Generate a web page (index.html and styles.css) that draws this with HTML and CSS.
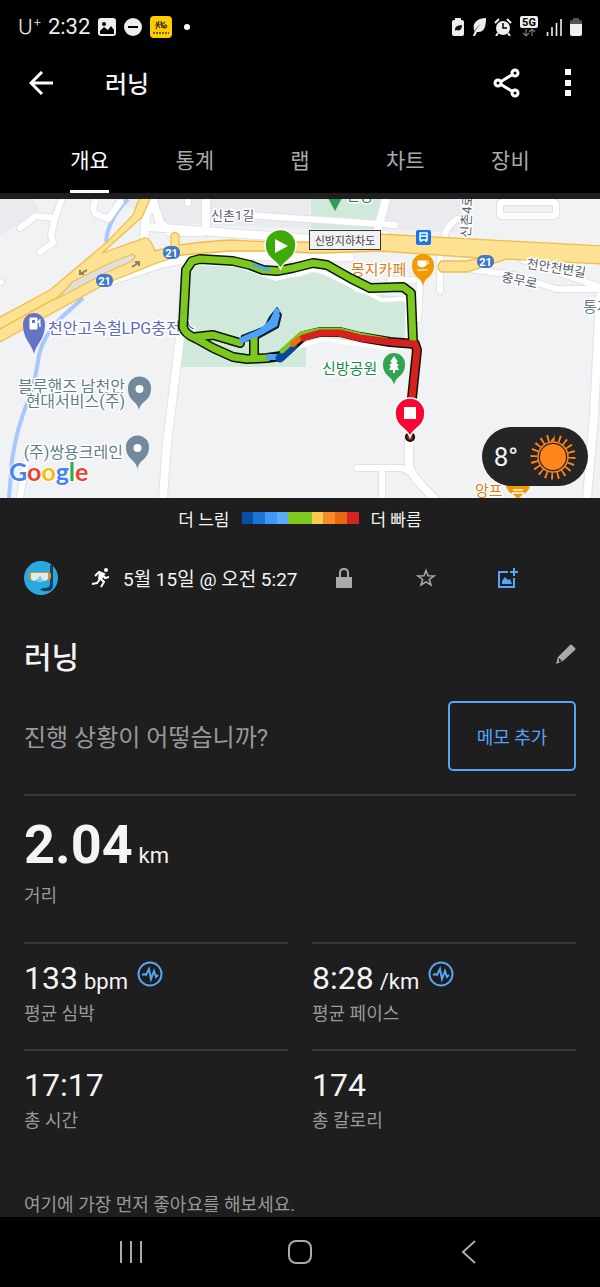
FILE: index.html
```html
<!DOCTYPE html>
<html lang="ko">

<head>
  <meta charset="UTF-8">
  <title>러닝</title>
  <meta name="viewport" content="width=device-width, initial-scale=1">
  <link rel="stylesheet" href="styles.css">
</head>

<body>

  <header>
    <!-- Status bar -->
    <div class="status-bar">
      <div class="status-group">
        <span class="carrier">U<sup>+</sup></span>
        <span class="clock">2:32</span>
        <svg width="18" height="18" viewBox="0 0 18 18">
          <rect width="18" height="18" rx="3" fill="#eee"/>
          <circle cx="6" cy="6" r="2" fill="#000"/>
          <path d="M2 13l4-4 4 3 3-4 3 4v4H2z" fill="#000"/>
        </svg>
        <svg width="18" height="18" viewBox="0 0 18 18">
          <circle cx="9" cy="9" r="9" fill="#eee"/>
          <path d="M4 9h10" stroke="#000" stroke-width="2"/>
        </svg>
        <svg width="22" height="22" viewBox="0 0 22 22">
          <rect width="22" height="22" rx="4" fill="#fc0"/>
          <path d="M5 9l6-1M6 6l4 6M9 5l-3 8M11 5l1 7M11 9l4-3M12 9l2 3M14 10c3-3 4 2 0 2z" fill="none" stroke="#42350c" stroke-width="1.200"/>
          <path d="M3 17h16" stroke="#75600a" stroke-width="2" stroke-dasharray="2 1"/>
        </svg>
        <span class="dot"></span>
      </div>
      <div class="status-group status-right">
        <svg width="12" height="18" viewBox="0 0 12 18">
          <path d="M3 2V0h6v2h1q2 0 2 2v12q0 2-2 2H2q-2 0-2-2V4q0-2 2-2z" fill="#eee"/>
          <path d="M3 13Q2 7 10 7Q10 14 4 12L2 14M4 12l3-3" fill="#111"/>
        </svg>
        <svg width="14" height="18" viewBox="0 0 14 18">
          <path d="M3 14C-1 7 4 0 14 0C14 9 12 15 5 14L3 18H1Q3 11 9 6Q3 10 2 15z" fill="#eee"/>
        </svg>
        <svg width="18" height="18" viewBox="0 0 18 18">
          <circle cx="9" cy="10" r="7" fill="#eee"/>
          <path d="M1 5l4-4M17 5l-4-4M4 15l-2 3M14 15l2 3" stroke="#eee" stroke-width="2"/>
          <path d="M9 5v5h4" fill="none" stroke="#000" stroke-width="1.500"/>
        </svg>
        <svg width="18" height="21" viewBox="0 0 18 21">
          <rect width="18" height="12" rx="2" fill="#eee"/>
          <text x="9" y="10" class="five-g">5G</text>
          <path d="M6 13v6M3 17l3 3 3-3M12 20v-6M9 16l3-3 3 3" fill="none" stroke="#777" stroke-width="1.200"/>
        </svg>
        <svg width="16" height="18" viewBox="0 0 16 18">
          <path d="M1.500 14v4M6 9v9M10.500 5v13M15 1v17" stroke="#eee" stroke-width="1.600"/>
        </svg>
        <svg width="12" height="18" viewBox="0 0 12 18">
          <path d="M3 2V0h6v2h1q2 0 2 2v2H0V4q0-2 2-2z" fill="#555"/>
          <path d="M0 6h12v10q0 2-2 2H2q-2 0-2-2z" fill="#eee"/>
        </svg>
      </div>
    </div>

    <!-- App bar -->
    <div class="app-bar">
      <a class="icon-btn" href="#" aria-label="뒤로">
        <svg width="24" height="24" viewBox="0 0 24 24"><path d="M13 1L2 12l11 11M2 12h22" fill="none" stroke="#fff" stroke-width="3"/></svg>
      </a>
      <h1>러닝</h1>
      <button class="icon-btn" type="button" aria-label="공유">
        <svg width="28" height="30" viewBox="0 0 28 30">
          <g fill="none" stroke="#fff" stroke-width="3">
            <circle cx="5" cy="15" r="3"/><circle cx="22" cy="5" r="3"/><circle cx="22" cy="25" r="3"/>
            <path d="M8 13.500L19.500 6.500M8 16.500l11.500 7"/>
          </g>
        </svg>
      </button>
      <button class="icon-btn" type="button" aria-label="더보기">
        <svg width="6" height="28" viewBox="0 0 6 28"><path d="M0 0h6v6H0zM0 11h6v6H0zM0 21h6v6H0z" fill="#fff"/></svg>
      </button>
    </div>

    <nav class="tabs">
      <a class="active" href="#overview">개요</a>
      <a href="#stats">통계</a>
      <a href="#laps">랩</a>
      <a href="#charts">차트</a>
      <a href="#gear">장비</a>
    </nav>
  </header>

  <main id="overview">
    <!-- Route map -->
    <section class="map">
      <svg class="map-canvas" viewBox="0 0 600 299">
        <defs>
          <path id="lanes" d="M62 0L55 19 36 17 20 29M55 19L51 36 53 44 40 53M96 0q-5 10 0 15l12 5 12-17M188 0v4M0 83h1M245 16l150 10M503 3q-3 0-3 3v9q0 2 3 2h50q3 0 3-3V7q0-4-3-4zM445 38q0-10 12-18M440 54v38M420 82l-2 38M390 81h24M470 70l44 6 42 14h44M523 61l77 27M357 269h44l12 5M382 270v29M28 252l-8 47"/>
          <path id="streets" d="M144 44l2-28 8-16M152 0l8 24 10 9h32M206 26V0M386 0l-8 30M150 28l160 12 76-4M110 82l50-17 40-8h60l50 2 40-1M187 60L181 130 167 244 163 299M600 97l-6 120-7 82M409 238v28q0 8 20 28l8 8"/>
        </defs>
        <rect width="600" height="299" fill="#f0f2f4"/>
        <path d="M0 0h34l6 11L0 36zM110 0h200v30L170 24zM387 0h75v34l-80-4z" fill="#e9ebef"/>
        <path d="M311 0h72l-5 30h-67zM190 66h50L263 78h37l13-5 22 5 22 16 48 4v44H306v26H181z" fill="#d0e9da"/>

        <!-- Stream -->
        <path d="M128 0Q108 20 106 43M83 99L62 118Q43 137 39 156Q36 178 30 197Q16 230 12 262L9 299" fill="none" stroke="#a7c8fb" stroke-width="4"/>

        <!-- Side roads -->
        <g fill="none" stroke-linecap="round" stroke-linejoin="round">
          <use href="#lanes" stroke="#e0e2e6" stroke-width="8"/>
          <use href="#streets" stroke="#e0e2e6" stroke-width="10"/>
          <use href="#lanes" stroke="#fff" stroke-width="6"/>
          <use href="#streets" stroke="#fff" stroke-width="8"/>
        </g>
        <path d="M190 70q0-6 8-6l40 2 38 14 40-10 36 17 30 14 22-1 4 4v44l-22 1-28-4-36-5-24 8-18 12" fill="none" stroke="#fff" stroke-width="4"/>

        <!-- Highways -->
        <g fill="#fde293" stroke="#f3bc48" stroke-width="1.300">
          <path d="M-2 119L50 91 107 43 133 16 140-2H151L142 18 102 54 145 39Q150 38 155 52L171 48V36q4-5 8 0V46L203 43 230 41 270 43H310L380 35 602 47V65L507 60 467 73H441q-6-5 0-11L467 62 480 59 380 52 320 54 270 52H230L182 56 157 64 107 84-2 144z"/>
          <path d="M54 101Q64 94 72 83L110 64 133 55Q138 58 130 63L107 73 68 94z" fill="#dedfe1"/>
        </g>
        <path d="M0 130L54 100" stroke="#f3b73d" stroke-width="1.300"/>
        <g stroke="#8b8163" stroke-width="2" fill="none">
          <path d="M87 71l-7 4M80 71v4h4M132 68l6-4M135 63l4 0v4"/>
        </g>

        <!-- Place names -->
        <g class="labels">
          <text x="211" y="21" class="street">신촌1길</text>
          <text x="470" y="39" class="street" transform="rotate(-87 470 39)">신촌4로</text>
          <text x="526" y="69" class="street" transform="rotate(9 526 69)">천안천변길</text>
          <text x="501" y="82" class="street" transform="rotate(12 501 82)">충무로</text>
          <text x="583" y="113" class="place slate">통계</text>
          <text x="48" y="135" class="place wide indigo">천안고속철LPG충전소</text>
          <text x="125" y="193" class="place wide slate end">블루핸즈 남천안</text>
          <text x="125" y="208" class="place wide slate end">현대서비스(주)</text>
          <text x="123" y="259" class="place wide slate end">(주)쌍용크레인</text>
          <text x="351" y="76" class="place orange">몽지카페</text>
          <text x="322" y="175" class="place green">신방공원</text>
          <text x="475" y="297" class="place orange">앙프</text>
          <text x="346" y="2" class="place green">신방</text>
        </g>

        <!-- Recorded track -->
        <g fill="none" stroke-linejoin="round" stroke-linecap="round">
          <path d="M413 143L411 94 403 88 370 89 350 79 327 66 313 64 293 69 277 72 263 71 250 66 233 62 200 60 192 62 186 71 185 91 183 128Q185 135 195 139L213 149 233 158 247 160 267 159 281 157 303 137 320 133H340L360 138 390 143 415 145 417 151 412 199M195 138L213 136 240 144M254 139v18M410 238h.1" stroke="#0b1405" stroke-width="10"/>
          <path d="M277 109L281 116 278 128 258 139 240 143 242 137 265 128 270 118z" fill="#4da2fb" stroke="#10212c" stroke-width="2"/>
          <path d="M413 143L411 94 403 88 370 89 350 79 327 66 313 64 293 69 277 72 263 71 250 66 233 62 200 60 192 62 186 71 185 91 183 128Q185 135 195 139L213 149 233 158 247 160 267 159M195 138L213 136 240 144M254 139v18" stroke="#7cc81e" stroke-width="7"/>
          <path d="M242 141L262 132 273 122 277 112" stroke="#4da2fb" stroke-width="6"/>
          <path d="M254 66l15 5" stroke="#4da2fb" stroke-width="3"/>
          <path d="M269 158h10" stroke="#4da2fb" stroke-width="6"/>
          <path d="M280 159L293 147" stroke="#04499c" stroke-width="9"/>
          <path d="M282 152L301 135 320 131h20L360 136 386 141" stroke="#7cc81e" stroke-width="5"/>
          <path d="M303 139L320 134H340L360 139 390 143 415 145 417 151 412 199" stroke="#d8201f" stroke-width="7"/>
          <path d="M293 145l5-4" stroke="#f06b0b" stroke-width="6"/>
          <circle cx="410" cy="238" r="3" fill="#a42326"/>
        </g>

        <rect x="309.500" y="31.500" width="71" height="19" fill="#f1f1f4" stroke="#333"/>
        <text x="345" y="46" class="sign">신방지하차도</text>
        <g fill="#3d78cb">
          <rect x="96" y="75" width="17" height="13" rx="6"/><rect x="163" y="47" width="17" height="13" rx="6"/><rect x="477" y="56" width="17" height="13" rx="6"/>
        </g>
        <g class="shield"><text x="104.500" y="86">21</text><text x="171.500" y="58">21</text><text x="485.500" y="67">21</text></g>
        <rect x="416" y="31" width="15" height="15" rx="2" fill="#1976e8"/>
        <path d="M420 34h7v7h-7zM420 37h7M421 41v2M426 41v2" fill="none" stroke="#fff" stroke-width="1.500"/>

        <!-- Pins -->
        <path d="M34 155C32 145 23 141 23 125a11 11 0 0 1 22 0C45 141 36 145 34 155z" fill="#6674c6"/>
        <path d="M30 130v-11h7v11zM37 123q3 0 3 5v-8" fill="#fff" stroke="#fff"/><path d="M32 121h3v3h-3z" fill="#6674c6"/>
        <path d="M139 211C137 201 128 203 128 189a11 11 0 0 1 23 0C151 203 141 201 139 211z" fill="#71899a"/><circle cx="139.500" cy="190" r="4" fill="#fff"/>
        <path d="M137.500 270C136 260 126 261 126 248a11 11 0 0 1 23 0C149 261 139 260 137.500 270z" fill="#71899a"/><circle cx="137.500" cy="249" r="4" fill="#fff"/>
        <path d="M423 87C421 77 412 79 412 66a11 11 0 0 1 22 0C434 79 425 77 423 87z" fill="#f39a00"/>
        <path d="M418 62h8v4q-4 4-8 0z" fill="#fff" stroke="#fff"/><path d="M426 62q4 0 2 3h-2M417 71h11" fill="none" stroke="#fff"/>
        <path d="M335 12l-7-13h14z" fill="#2f9e50"/>
        <path d="M394 186C392 176 383 178 383 165a11 11 0 0 1 22 0C405 178 396 176 394 186z" fill="#32a350"/>
        <path d="M394 157l-4 6h2l-3 4h2l-2 4h4v3h2v-3h4l-2-4h2l-3-4h2z" fill="#fff"/>
        <path d="M506 286q1 7 7 9l5 5 5-5q6-2 7-9z" fill="#f39a00"/><path d="M513 291h10M512 294h12" stroke="#fff" stroke-width="1.500"/>
        <path d="M280.500 70C277 61 265 60 265 46a15 15 0 0 1 31 0C296 60 284 61 280.500 70z" fill="#3fa90a" stroke="#fff" stroke-width="1.500"/>
        <path d="M275 40v14l13-7z" fill="#fff"/>
        <path d="M410 238C407 229 395 228 395 214a15 15 0 0 1 30 0C425 228 413 229 410 238z" fill="#fa0534" stroke="#fff" stroke-width="1.500"/>
        <path d="M404 208h12v12h-12z" fill="#fff"/>
        <text x="9" y="282" class="google"><tspan fill="#4285f4">G</tspan><tspan fill="#ea4335">o</tspan><tspan fill="#fbbc05">o</tspan><tspan fill="#4285f4">g</tspan><tspan fill="#34a853">l</tspan><tspan fill="#ea4335">e</tspan></text>
      </svg>
      <div class="weather">
        <span>8°</span>
        <svg width="46" height="46" viewBox="0 0 46 46">
          <circle cx="23" cy="23" r="13" fill="#ff861c"/>
          <circle cx="23" cy="23" r="15" fill="none" stroke="#ff861c" stroke-width="1.500"/>
          <circle cx="23" cy="23" r="19" fill="none" stroke="#ff861c" stroke-width="7" pathLength="100" stroke-dasharray="1.500 3.500"/>
        </svg>
      </div>
    </section>

    <!-- Pace legend -->
    <div class="legend">
      <span>더 느림</span>
      <div class="legend-bar">
        <i class="pace-1"></i><i class="pace-2"></i><i class="pace-3"></i><i class="pace-4"></i><i class="pace-5"></i>
        <i class="pace-5"></i><i class="pace-6"></i><i class="pace-7"></i><i class="pace-8"></i><i class="pace-9"></i>
      </div>
      <span>더 빠름</span>
    </div>

    <div class="content">
      <div class="activity-row">
        <svg class="avatar" width="34" height="34" viewBox="0 0 34 34">
          <circle cx="17" cy="17" r="17" fill="#2aa9df"/>
          <path d="M26 4h3v21q0 5-6 5-5 1-7-2l4-1q6 0 6-4z" fill="#173f61"/>
          <rect x="5" y="11" width="22" height="8" rx="3" fill="#e48a32"/>
          <path d="M7 12h17v6q-4 4-7 0l-1-2-2 2q-4 4-7 0z" fill="#d5f0ed"/>
          <path d="M16 14l-3 7h6z" fill="#79cbe2"/>
        </svg>
        <svg class="runner" width="19" height="20" viewBox="0 0 19 20">
          <circle cx="15" cy="2" r="2" fill="#fff"/>
          <path d="M4 8l4-4 5 2-3 5 3 3-3 5M9 11l-3 4-5 1M12 7l2 3 4-1" fill="none" stroke="#fff" stroke-width="2"/>
          <path d="M8 4l5 2-3 6-3-1z" fill="#fff"/>
        </svg>
        <time>5월 15일 @ 오전 5:27</time>
        <div class="actions">
          <button type="button" aria-label="비공개">
            <svg width="16" height="20" viewBox="0 0 16 20"><path d="M0 9h16v11H0z" fill="#aaa"/><path d="M4 9V5q0-4 4-4t4 4v4" fill="none" stroke="#aaa" stroke-width="2"/></svg>
          </button>
          <button type="button" aria-label="즐겨찾기">
            <svg width="20" height="20" viewBox="0 0 20 20"><path d="M10 2.500l2 5.200 6 .3-4.700 3.500 1.700 5.500-5-3.200-5 3.200 1.700-5.500L2 8l6-.3z" fill="none" stroke="#aaa" stroke-width="1.500"/></svg>
          </button>
          <button type="button" aria-label="사진 추가">
            <svg width="20" height="20" viewBox="0 0 20 20"><path d="M10 4H1v15h15V10M16 0v8M12 4h8" fill="none" stroke="#54a4f7" stroke-width="2"/><path d="M4 16v-3l3-4 3 3 2-1 2 5z" fill="#54a4f7"/></svg>
          </button>
        </div>
      </div>

      <div class="title-row">
        <h2>러닝</h2>
        <button type="button" aria-label="이름 편집">
          <svg width="20" height="20" viewBox="0 0 20 20"><path d="M0 20l2-7L14 1q1-1 2 0l3 3q1 1 0 2L7 17z" fill="#aaa"/><path d="M3 14l3 3-3 1z" fill="#1e1e1e"/></svg>
        </button>
      </div>

      <div class="note-row">
        <p>진행 상황이 어떻습니까?</p>
        <button class="note-btn" type="button">메모 추가</button>
      </div>

      <!-- Stats -->
      <div class="distance">
        <p class="value">2.04 <span>km</span></p>
        <p class="label">거리</p>
      </div>

      <div class="metrics">
        <div class="metric">
          <p class="value">133 <span>bpm</span>
            <svg class="pulse" width="26" height="26" viewBox="0 0 26 26"><circle cx="13" cy="13" r="11.500"/><path d="M5 14l2-1 2 1 3-6 2 10 3-8 2 6 2-2"/></svg>
          </p>
          <p class="label">평균 심박</p>
        </div>
        <div class="metric">
          <p class="value">8:28 <span>/km</span>
            <svg class="pulse" width="26" height="26" viewBox="0 0 26 26"><circle cx="13" cy="13" r="11.500"/><path d="M5 14l2-1 2 1 3-6 2 10 3-8 2 6 2-2"/></svg>
          </p>
          <p class="label">평균 페이스</p>
        </div>
        <div class="metric">
          <p class="value">17:17</p>
          <p class="label">총 시간</p>
        </div>
        <div class="metric">
          <p class="value">174</p>
          <p class="label">총 칼로리</p>
        </div>
      </div>

      <p class="like-hint">여기에 가장 먼저 좋아요를 해보세요.</p>
    </div>
  </main>

  <!-- System navigation -->
  <footer>
    <button type="button" aria-label="최근 앱">
      <svg width="24" height="24" viewBox="0 0 24 24"><path d="M2 1v22M12 1v22M22 1v22"/></svg>
    </button>
    <button type="button" aria-label="홈">
      <svg width="24" height="24" viewBox="0 0 24 24"><rect x="1" y="1" width="22" height="22" rx="7"/></svg>
    </button>
    <button type="button" aria-label="이전">
      <svg width="24" height="24" viewBox="0 0 24 24"><path d="M18 1L6 12l12 11"/></svg>
    </button>
  </footer>

</body>

</html>
```
FILE: styles.css
```css
/* Basic Reset */
* {
  margin: 0;
  padding: 0;
  box-sizing: border-box;
}

body {
  font-family: Roboto, "Noto Sans CJK KR", sans-serif;
  font-size: 18px;
  line-height: 24px;
  color: #f4f4f4;
  background: #000;
  min-height: 100vh;
  display: flex;
  flex-direction: column;
}

button {
  background: none;
  border: none;
  color: inherit;
  font: inherit;
  cursor: pointer;
}

a {
  color: inherit;
  text-decoration: none;
}

svg {
  display: block;
  flex-shrink: 0;
}

/* Status bar */
.status-bar {
  height: 53px;
  padding: 0 18px;
  display: flex;
  justify-content: space-between;
  align-items: center;
  color: #eee;
}

.status-group {
  display: flex;
  align-items: center;
  gap: 8px;
}

.carrier {
  font-family: Inter, sans-serif;
  font-size: 20px;
  font-weight: 300;
}

.carrier sup {
  font-size: 14px;
  line-height: 0;
}

.clock {
  margin-left: -2px;
  font-size: 22px;
}

.dot {
  width: 6px;
  height: 6px;
  margin-left: 4px;
  border-radius: 50%;
  background: #fff;
}

.five-g {
  font-size: 11px;
  font-weight: 700;
  text-anchor: middle;
}

/* App bar */
.app-bar {
  height: 60px;
  padding: 0 29px;
  display: flex;
  align-items: center;
  gap: 44px;
}

.app-bar h1 {
  flex: 1;
  margin-left: 8px;
  padding-top: 4px;
  font-size: 24px;
  font-weight: 500;
}

/* Tabs */
.tabs {
  display: grid;
  grid-template-columns: repeat(5, 1fr);
  justify-items: center;
  padding: 36px 37px 0;
}

.tabs a {
  padding-bottom: 17px;
  border-bottom: 3px solid transparent;
  font-size: 21px;
  color: #aaa;
}

.tabs a.active {
  color: #fff;
  border-color: #fff;
}

/* Main Content */
main {
  flex: 1;
  padding-top: 6px;
  background: #1e1e1e;
}

/* Map */
.map {
  position: relative;
}

.map-canvas {
  width: 100%;
  height: auto;
}

.labels text {
  paint-order: stroke;
  stroke: #fff;
  stroke-width: 3px;
  stroke-linejoin: round;
}

.street {
  font-size: 13px;
  fill: #59616b;
}

.place {
  font-size: 15px;
}

.wide {
  font-size: 16px;
}

.end {
  text-anchor: end;
}

.slate {
  fill: #5f7d8c;
}

.indigo {
  fill: #5c6bc0;
}

.orange {
  fill: #e37a12;
}

.green {
  fill: #188a46;
}

.sign {
  font-size: 11px;
  fill: #444;
  text-anchor: middle;
}

.shield {
  font-size: 11px;
  font-weight: 700;
  fill: #fff;
  text-anchor: middle;
}

.google {
  font-family: Lato, sans-serif;
  font-size: 25px;
  font-weight: 700;
  paint-order: stroke;
  stroke: #fff;
  stroke-width: 2px;
}

.weather {
  position: absolute;
  right: 12px;
  bottom: 12px;
  height: 59px;
  padding: 0 12px;
  display: flex;
  align-items: center;
  gap: 12px;
  border-radius: 30px;
  background: #252525;
  font-size: 26px;
}

/* Legend */
.legend {
  height: 40px;
  display: flex;
  justify-content: center;
  align-items: center;
  gap: 12px;
  font-size: 17px;
}

.legend span {
  padding-top: 3px;
}

.legend-bar {
  width: 117px;
  height: 12px;
  display: flex;
}

.legend-bar i {
  flex: 1;
}

.pace-1 { background: #0450a5; }
.pace-2 { background: #1976d8; }
.pace-3 { background: #3f98f6; }
.pace-4 { background: #5aabfc; }
.pace-5 { background: #80c91f; }
.pace-6 { background: #fbcb4e; }
.pace-7 { background: #fb8b2a; }
.pace-8 { background: #ec680e; }
.pace-9 { background: #d52323; }

/* Activity */
.content {
  padding: 15px 24px 0;
}

.activity-row {
  height: 50px;
  display: flex;
  align-items: center;
}

.runner {
  margin: 0 13px 0 33px;
}

.activity-row time {
  padding-top: 4px;
  font-size: 19px;
}

.actions {
  display: flex;
  margin: 0 27px 0 auto;
}

.actions button {
  width: 82px;
  height: 40px;
  display: flex;
  justify-content: center;
  align-items: center;
}

.title-row {
  margin-top: 31px;
  height: 40px;
  display: flex;
  justify-content: space-between;
  align-items: center;
}

.title-row h2 {
  padding-top: 8px;
  font-size: 30px;
  font-weight: 500;
}

.note-row {
  margin-top: 27px;
  padding-bottom: 23px;
  border-bottom: 2px solid #383838;
  display: flex;
  justify-content: space-between;
  align-items: center;
}

.note-row p {
  padding-top: 4px;
  font-size: 24px;
  color: #999;
}

.note-btn {
  width: 128px;
  height: 70px;
  padding-top: 3px;
  border: 2px solid #54a4f7;
  border-radius: 5px;
  color: #54a4f7;
}

/* Stats */
.value {
  display: flex;
  align-items: baseline;
  gap: 6px;
  font-size: 32px;
  line-height: 40px;
}

.value span {
  font-size: 22px;
  line-height: 24px;
}

.label {
  margin-top: 4px;
  color: #999;
}

.distance {
  padding: 21px 0 34px;
}

.distance .value {
  font-size: 54px;
  font-weight: 700;
  line-height: 56px;
}

.distance .value span {
  font-weight: 400;
}

.distance .label {
  margin-top: 11px;
}

.metrics {
  display: grid;
  grid-template-columns: 1fr 1fr;
  column-gap: 24px;
}

.metric {
  padding: 14px 0 23px;
  border-top: 2px solid #383838;
}

.pulse {
  align-self: flex-start;
  margin: 3px 0 0 3px;
  fill: none;
  stroke: #54a4f7;
  stroke-width: 2px;
}

.like-hint {
  margin-top: 37px;
  color: #999;
}

/* Footer */
footer {
  height: 70px;
  padding: 0 47px;
  display: grid;
  grid-template-columns: repeat(3, 1fr);
  justify-items: center;
  align-items: center;
}

footer svg {
  fill: none;
  stroke: #aaa;
  stroke-width: 2px;
}
```
